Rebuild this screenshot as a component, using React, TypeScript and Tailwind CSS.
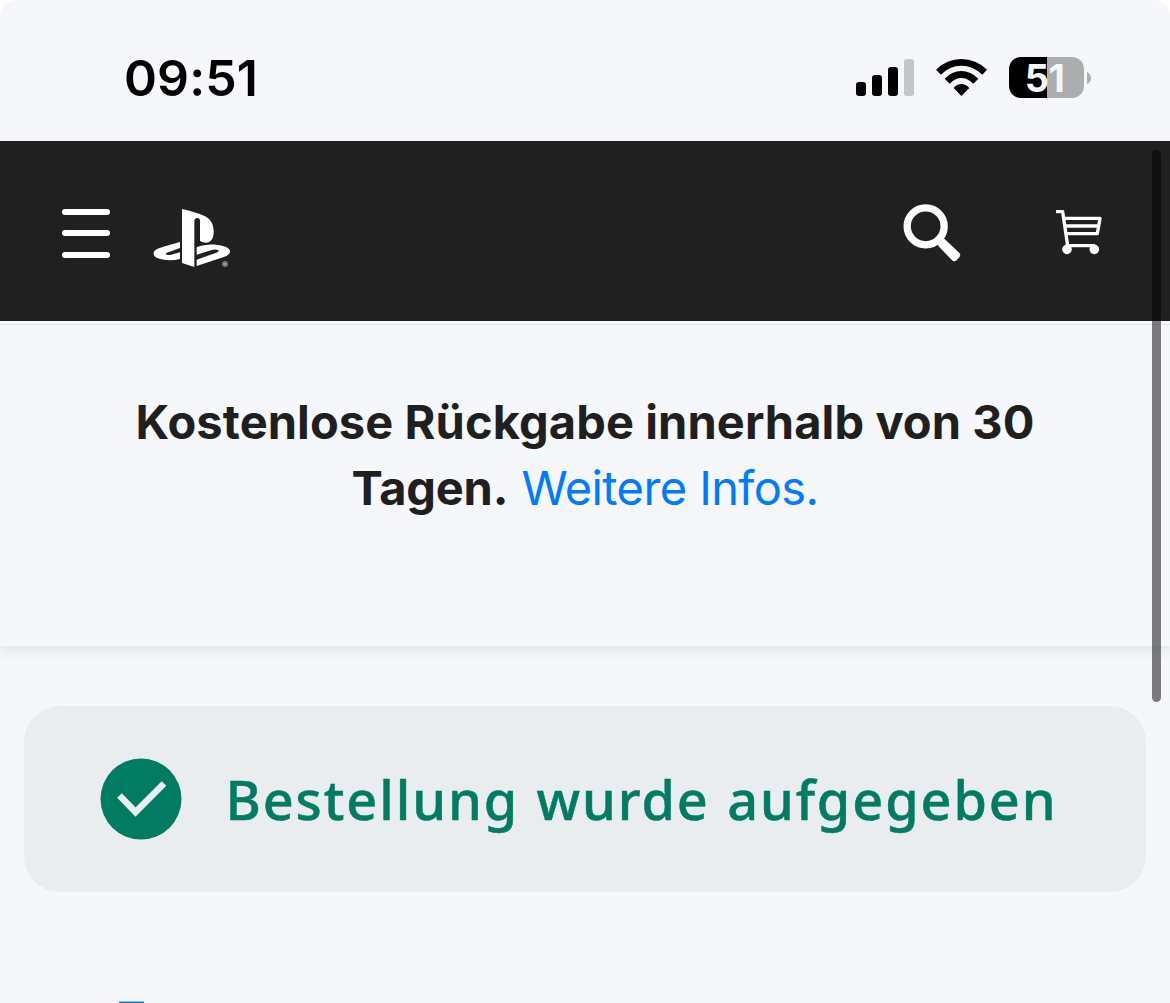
import React from "react";

function SignalIcon() {
  return (
    <svg className="h-[38px] w-[58px]" viewBox="0 0 58 38">
      <rect x="0" y="24" width="10" height="14" rx="3" />
      <rect x="16" y="17" width="10" height="21" rx="3" />
      <rect x="32" y="9" width="10" height="29" rx="3" />
      <rect x="48" y="1" width="10" height="37" rx="3" fill="#c4c5c9" />
    </svg>
  );
}

function WifiIcon() {
  return (
    <svg className="h-[40px] w-[52px]" viewBox="288 54 156 120">
      <path d="M288 89 Q320 57 364 57 T441 89 L427 104 Q399 77 364 77 T303 104Z" />
      <path d="M314 116 Q336 93 364 93 T415 116 L400 131 Q383 114 364 114 T329 131Z" />
      <path d="M341 144 Q351 132 364 132 T388 144 L364 168Z" />
    </svg>
  );
}

function Battery() {
  return (
    <div className="flex items-center gap-[3px]">
      <div className="flex h-[41px] w-[75px] justify-center rounded-[12px] bg-[linear-gradient(90deg,#000_38px,#acadaf_38px)] pr-1 text-[38px] leading-[42px] font-bold tracking-[-0.6px] text-[#f6f7fb]">
        51
      </div>
      <svg className="h-[14px] w-1" viewBox="0 0 4 14" fill="#acadaf">
        <path d="M0 1 Q4 3 4 7 T0 13Z" />
      </svg>
    </div>
  );
}

function PlayStationLogo() {
  return (
    <svg className="h-[60px] w-[78px]" viewBox="340 54 234 180" fill="#fff">
      <path d="M427 57 C449 62 475 69 493 77 C514 87 522 103 522 124 C522 147 514 158 498 158 Q489 158 481 153 V94 Q481 84 473 84 Q464 84 464 95 V231 L427 219Z" />
      <path d="M421 156 V174 L382 188 Q373 192 382 194 Q392 196 402 192 L421 187 V207 Q392 214 366 208 C346 204 340 196 342 188 C344 179 362 173 376 169Z" />
      <path d="M471 172 C496 162 525 161 549 168 C566 172 572 179 571 186 C569 194 559 199 550 202 L471 228 V209 L530 188 Q541 184 535 180 Q526 177 514 181 L471 194Z" />
      <circle cx="556" cy="222" r="9" fill="#777" />
      <circle cx="556" cy="222" r="4" fill="#999" />
    </svg>
  );
}

function SearchIcon() {
  return (
    <svg className="h-[60px] w-[60px]" viewBox="39 39 180 180" fill="none" stroke="#fff">
      <circle cx="107" cy="109" r="55.5" strokeWidth="22" />
      <path d="M145 158 L152 148 L164 147 L209 190 Q213 196 208 202 L198 212 Q192 216 186 211 L145 168Z" fill="#fff" stroke="none" />
    </svg>
  );
}

function CartIcon() {
  return (
    <svg className="h-[46px] w-[48px]" viewBox="496 57 144 138" fill="none" stroke="#fff" strokeWidth="10" strokeLinejoin="round">
      <path d="M499 65 H519 L534 167 H616" />
      <path d="M521 85 H631 L623 131 H529" />
      <path d="M524 108 H626" />
      <circle cx="532" cy="178" r="14.5" fill="#fff" stroke="none" />
      <circle cx="614" cy="178" r="14.5" fill="#fff" stroke="none" />
    </svg>
  );
}

export default function App() {
  return (
    <div className="bg-white">
      <div className="relative h-[1003px] w-[1170px] overflow-hidden rounded-t-[16px] bg-[#f6f7fb] font-['Inter',sans-serif]">
        <div className="flex h-[141px] items-start justify-between pr-[79px] pl-[124px]">
          <div className="pt-[53px] text-[50px] leading-[50px] font-semibold tracking-[0.1px] text-black">09:51</div>
          <div className="flex items-start pt-[57px]">
            <div className="pt-px"><SignalIcon /></div>
            <div className="ml-[22px] pt-px"><WifiIcon /></div>
            <div className="ml-[21px]"><Battery /></div>
          </div>
        </div>

        <header className="flex h-[180px] items-start bg-[#202020] pl-[62px]">
          <div className="pt-[68px]">
            <div className="h-[6px] w-12 rounded-full bg-white" />
            <div className="mt-[15px] h-[6px] w-12 rounded-full bg-white" />
            <div className="mt-4 h-[6px] w-12 rounded-full bg-white" />
          </div>
          <div className="pt-[67px] pl-[43px]"><PlayStationLogo /></div>
          <div className="ml-auto pt-[62px]"><SearchIcon /></div>
          <div className="pt-[68px] pr-[67px] pl-[92px]"><CartIcon /></div>
        </header>

        <section className="h-[325px] shadow-[0_6px_12px_rgba(0,0,0,0.07)]">
          <div className="h-1 border-b border-[#e5e6ea]" />
          <p className="pt-[64px] text-center text-[47px] leading-[66px] text-[#1f1f1f]">
            <span className="font-bold tracking-[0.1px]">Kostenlose Rückgabe innerhalb von 30<br /></span>
            <span className="font-bold tracking-[-0.2px]">Tagen.</span>{" "}
            <a className="tracking-[-0.6px] text-[#007aff]">Weitere Infos.</a>
          </p>
        </section>

        <main className="px-6 pt-[60px]">
          <div className="flex h-[186px] items-center rounded-[36px] bg-[#e9edf0] pl-[76px]">
            <svg className="h-[82px] w-[82px]" viewBox="0 0 82 82">
              <circle cx="41" cy="41" r="40.5" fill="#027b63" />
              <path d="M19.5 37.5 L35.5 54 L64 25.5" fill="none" stroke="#e9edf0" strokeWidth="6.5" />
            </svg>
            <h1 className="pl-[43.5px] font-['Noto_Sans',sans-serif] text-[54px] leading-[74px] font-medium tracking-[1.9px] [word-spacing:1.5px] whitespace-nowrap text-[#027b63] [-webkit-text-stroke:0.5px_#027b63]">
              Bestellung wurde aufgegeben
            </h1>
          </div>
          <div className="mt-[109px] ml-[95px] h-2 w-[25px] rounded-t-[1px] border-t border-[#8fbfe6] bg-[#0070d1]" />
        </main>

        <div className="absolute top-[150px] right-[9px] h-[552px] w-[9px] rounded-full bg-black/50" />
      </div>
    </div>
  );
}
